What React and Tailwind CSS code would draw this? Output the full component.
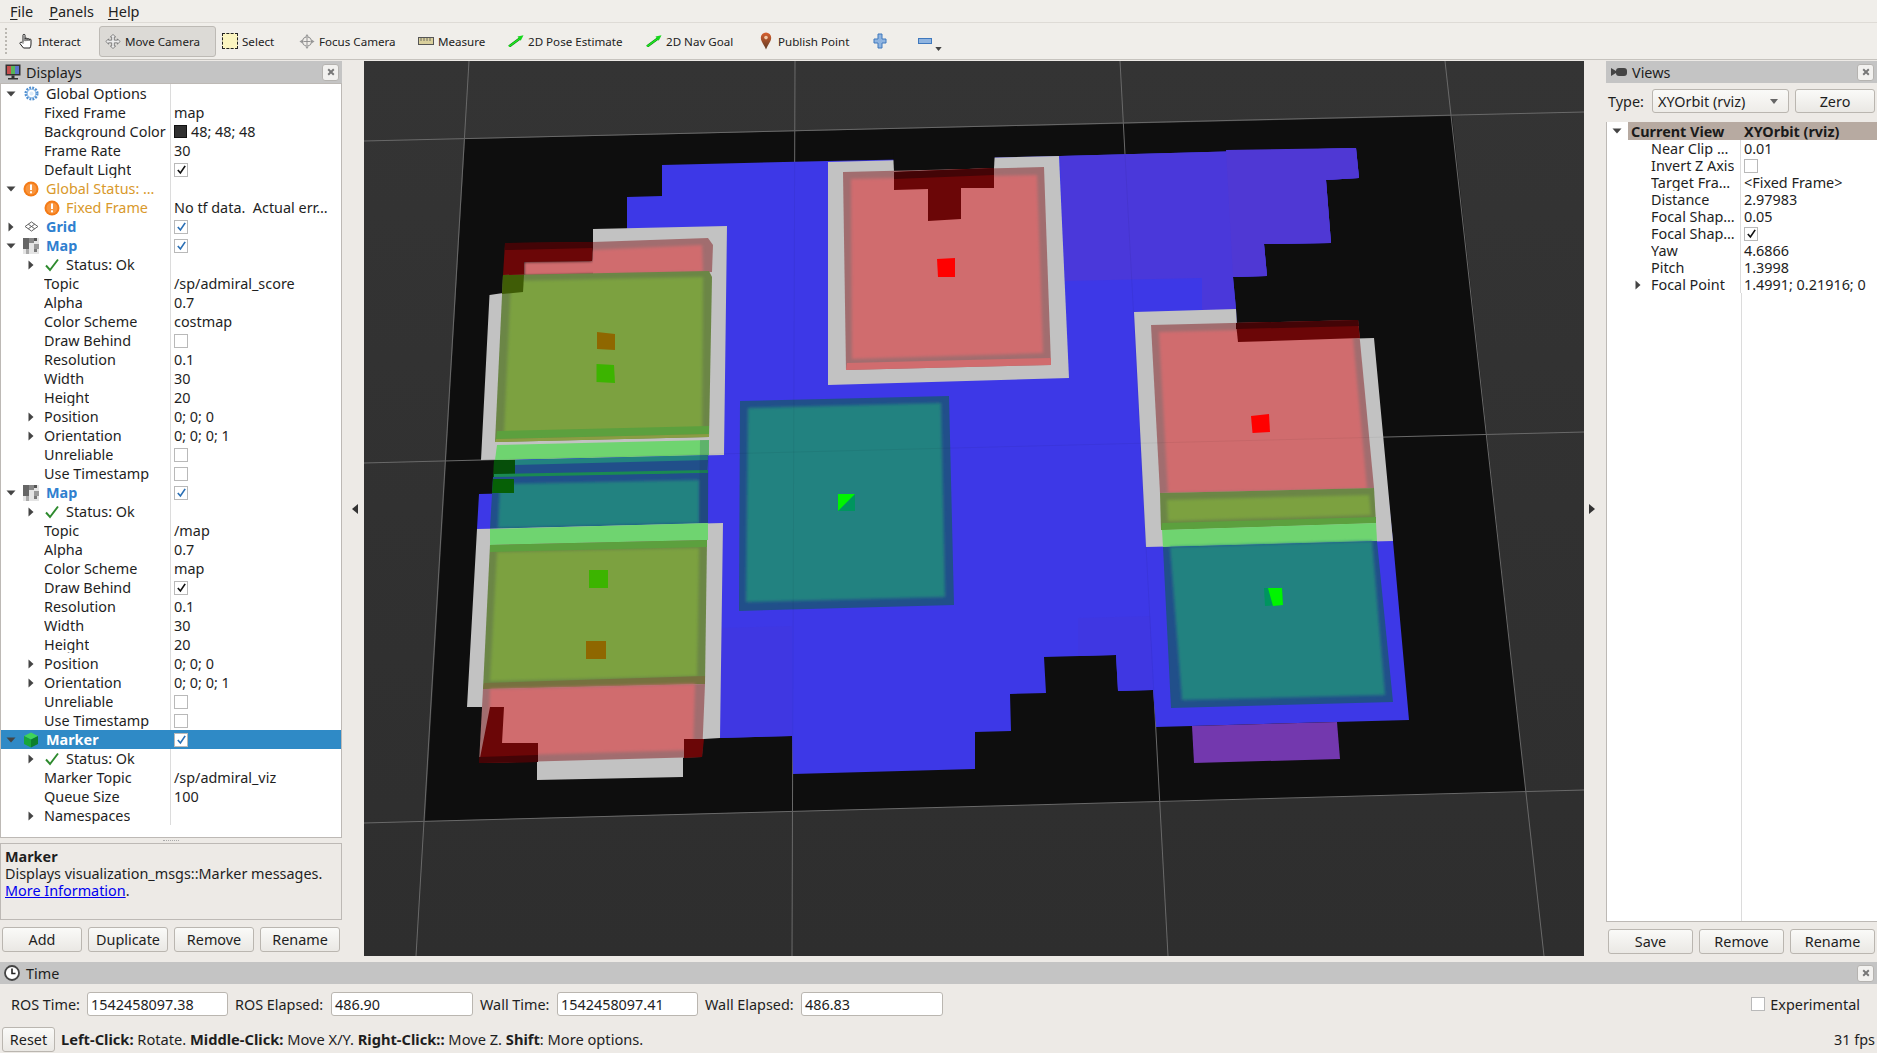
const Poly = ({ p, f, soft, o }) => (
    <polygon points={p} fill={f} filter={soft ? "url(#soft)" : undefined} opacity={o} />
);

const PINK = "#d06c6e";
const PINK_EDGE = "#a16d6f";
const DARK_RED = "#6b0607";
const DARK_RED_EDGE = "#430406";
const OLIVE = "#7ba13f";
const OLIVE_EDGE = "#6b8646";
const OLIVE_TOP = "#76713f";
const OLIVE_LOW = "#5ca03e";
const LIGHT = "#6fd470";
const TEAL = "#228280";
const TEAL_EDGE = "#214f8a";
const GREY = "#c2c2c2";
const BLUE = "#3d38e7";

const gridLines = [
    [469, 61, 416, 956],
    [795, 61, 792, 956],
    [1120, 61, 1168, 956],
    [1445, 61, 1544, 956],
    [364, 141, 1584, 112],
    [364, 463, 1584, 432],
    [364, 823, 1584, 790],
];

const Scene = () => (
    <svg viewBox="364 61 1220 895" className="block w-[1220px] h-[895px]">
        <defs>
            <filter id="soft" x="-5%" y="-5%" width="110%" height="110%">
                <feGaussianBlur stdDeviation="1.6" />
            </filter>
        </defs>
        <Poly p="465,139 1452,116 1526,792 425,821" f="#0e0e0e" />
        {gridLines.map((l, i) => (
            <line key={i} x1={l[0]} y1={l[1]} x2={l[2]} y2={l[3]} stroke="#6f6f6f" strokeWidth="1" />
        ))}

        {/* free space */}
        <Poly
            p="627,197 662,196 662,165 828,161 1060,156 1356,148 1359,178 1326,180 1331,243 1264,244 1267,276 1233,277 1236,309 1240,400 1380,420 1393,541 1409,720 1156,727 1153,690 1118,691 1116,655 1044,657 1046,693 1010,694 1011,731 975,732 975,769 793,774 792,736 720,738 715,530 477,529 479,494 515,493 515,460 600,300 627,228"
            f={BLUE}
        />
        <Poly p="1060,156 1356,148 1359,178 1326,180 1331,243 1264,244 1267,276 1233,277 1236,309 1202,310 1202,278 1065,281" f="#4a38da" />
        <Poly p="1226,150 1356,148 1359,178 1326,180 1331,243 1264,244 1267,276 1233,277" f="#4f38d4" />
        <Poly p="720,628 720,738 792,736 792,626" f="#3f37e2" />
        <Poly p="1078,618 1150,616 1153,690 1118,691 1116,655 1078,656" f="#3f37e2" />
        <Poly p="1192,726 1337,722 1340,759 1194,763" f="#7338ae" />

        {/* upper left block */}
        <Poly p="593,229 727,226 724,455 481,460 489.5,295 593,280" f={GREY} />
        <Poly p="593,242 708,238 713,245 712,272 593,276" f={PINK_EDGE} />
        <Poly p="524,262 592,261 592,250 702,245 703,272 524,276" f={PINK} soft />
        <Poly p="505,243 593,242 592,261 524,262 524,275 503,275" f={DARK_RED} />
        <Poly p="505,243 593,242 593,248 505,250" f={DARK_RED_EDGE} />
        <Poly p="503,275 709,271 712,277 709,437 495,442" f={OLIVE_EDGE} />
        <Poly p="511,281 703,277 702,430 504,434" f={OLIVE} soft />
        <Poly p="497,431 709,426 709,434 496,439" f={OLIVE_LOW} />
        <Poly p="496,439 709,434 709,437 495,442" f="#8a9d43" />
        <Poly p="503,275 524,275 523,292 502,294" f="#3f5c06" />
        <Poly p="497,445 709,440 709,455 495,460" f={LIGHT} />
        <Poly p="515,460 708,455 707,473 515,477" f={TEAL} />
        <Poly p="515,465 708,460 707,473 515,477" f={TEAL_EDGE} />
        <Poly p="494,460 515,460 515,476 493,477" f="#064f0a" />
        <Poly p="494,474 708,470 708,473 494,478" f="#1a8a52" />
        <Poly p="493,477 708,473 708,523 490,529" f={TEAL_EDGE} />
        <Poly p="500,484 699,480 699,523 498,528" f={TEAL} soft />
        <Poly p="493,479 514,479 514,493 492,493" f="#066006" />
        <Poly p="700,440 709,440 708,523 699,523" f="#20305a" o="0.2" />
        <Poly p="597,332 615,334 615,350 597,349" f="#8f6700" />
        <Poly p="596.5,364 614,365 615,383 596.5,382" f="#3cb400" />

        {/* lower left block */}
        <Poly p="477,529 723,523 720,738 704,739 683,758 683,777 537,780 537,762 500,740 490,707 467,707" f={GREY} />
        <Poly p="490,529 708,523 708,540 490,545" f={LIGHT} />
        <Poly p="490,545 707,540 705,684 483,689" f={OLIVE_EDGE} />
        <Poly p="497,552 699,548 697,676 490,681" f={OLIVE} soft />
        <Poly p="490,545 707,540 707,547 490,552" f={OLIVE_LOW} />
        <Poly p="484,683 705,676 705,684 483,689" f={OLIVE_TOP} />
        <Poly p="589,570 608,570 608,588 589,588" f="#3cb400" />
        <Poly p="586,641 606,641 606,659 586,659" f="#8f6700" />
        <Poly p="483,689 705,684 702,757 479,763" f={PINK_EDGE} />
        <Poly p="490,689 695,684 693,750 488,756" f={PINK} soft />
        <Poly p="490,707 504,707 502,743 538,743 538,762 479,763" f={DARK_RED} />
        <Poly p="684,739 704,739 702,757 684,758" f={DARK_RED} />
        <Poly p="479,757 538,755 538,762 479,763" f={DARK_RED_EDGE} />

        {/* top middle block */}
        <Poly p="828,162 1059,156 1069,378 828,385" f={GREY} />
        <Poly p="893,150 995,150 994,168 894,172" f="#0e0e0e" />
        <Poly p="843,172 1044,167 1051,365 846,370" f={PINK_EDGE} />
        <Poly p="851,179 1037,175 1043,353 852,359" f={PINK} soft />
        <Poly p="847,363 1051,358 1051,365 846,370" f={PINK} />
        <Poly p="894,172 994,168 994,188 961,188 961,219 928,221 928,189 894,190" f={DARK_RED} />
        <Poly p="894,172 994,168 994,175 894,179" f={DARK_RED_EDGE} />
        <Poly p="937,259 955,258 955,277 938,277" f="#ff0000" />

        {/* center teal block */}
        <Poly p="740,401 949,396 954,605 739,611" f={TEAL_EDGE} />
        <Poly p="748,408 941,403 945,597 746,602" f={TEAL} soft />
        <Poly p="838,494 855,494 855,511 838,511" f="#00955f" />
        <Poly p="838,494 855,494 838,511" f="#00f500" />

        {/* right block */}
        <Poly p="1134,312 1236,309 1238,342 1374,338 1393,541 1146,547" f={GREY} />
        <Poly p="1151,325 1358,320 1374,488 1160,493" f={PINK_EDGE} />
        <Poly p="1159,332 1352,327 1367,489 1168,493" f={PINK} soft />
        <Poly p="1236,323 1358,320 1360,338 1238,342" f={DARK_RED} />
        <Poly p="1236,323 1358,320 1359,326 1236,329" f={DARK_RED_EDGE} />
        <Poly p="1160,493 1374,488 1376,523 1161,530" f={OLIVE_EDGE} />
        <Poly p="1167,500 1369,495 1371,515 1168,521" f={OLIVE} soft />
        <Poly p="1162,523 1376,517 1376,523 1161,530" f={OLIVE_LOW} />
        <Poly p="1162,530 1376,523 1377,541 1163,547" f={LIGHT} />
        <Poly p="1163,547 1377,541 1393,702 1171,708" f={TEAL_EDGE} />
        <Poly p="1170,547 1372,541 1385,695 1182,700" f={TEAL} soft />
        <Poly p="1251,416 1269,414 1270,432 1252.5,433" f="#ff0000" />
        <Poly p="1264,588 1282,588 1283,605 1265,606" f="#00955f" />
        <Poly p="1268,588 1282,588 1283,605 1273,606" f="#00f500" />

        {gridLines.map((l, i) => (
            <line key={i} x1={l[0]} y1={l[1]} x2={l[2]} y2={l[3]} stroke="#000" strokeOpacity="0.05" strokeWidth="1" />
        ))}
    </svg>
);

const Arrow = ({ open }) => (
    <svg viewBox="0 0 10 10" className="w-[10px] h-[10px] shrink-0">
        {open ? <polygon points="0.5,2.5 9.5,2.5 5,7.5" fill="#444" /> : <polygon points="2.5,0.5 7.5,5 2.5,9.5" fill="#444" />}
    </svg>
);

const Check = ({ on, blue }) => (
    <span className="flex items-center justify-center w-[14px] h-[14px] bg-white border border-[#b9b9b9] shrink-0">
        {on && (
            <svg viewBox="0 0 12 12" className="w-[11px] h-[11px]">
                <path d="M2 6.5 L4.8 9.8 L10 2" fill="none" stroke={blue ? "#2a6fb5" : "#111"} strokeWidth="1.8" />
            </svg>
        )}
    </span>
);

const Warn = () => (
    <svg viewBox="0 0 16 16" className="w-[16px] h-[16px] shrink-0">
        <circle cx="8" cy="8" r="7.5" fill="#f47b16" />
        <circle cx="8" cy="8" r="5.5" fill="#f8953f" />
        <rect x="7" y="3.5" width="2" height="5.5" fill="#fff" />
        <rect x="7" y="10.3" width="2" height="2" fill="#fff" />
    </svg>
);

const Tick = () => (
    <svg viewBox="0 0 14 14" className="w-[14px] h-[14px] shrink-0">
        <path d="M1 7.5 L5 12 L13 1.5" fill="none" stroke="#2d8a2d" strokeWidth="1.9" />
    </svg>
);

const Gear = () => (
    <svg viewBox="0 0 16 16" className="w-[15px] h-[15px] shrink-0">
        <circle cx="8" cy="8" r="6.2" fill="none" stroke="#4f8fd0" strokeWidth="2.6" strokeDasharray="2 1.25" />
        <circle cx="8" cy="8" r="4.6" fill="none" stroke="#8db9e6" strokeWidth="1.2" />
        <circle cx="8" cy="8" r="2.2" fill="#dcebf9" />
    </svg>
);

const GridIcon = () => (
    <svg viewBox="0 0 16 12" className="w-[15px] h-[11px] shrink-0">
        <path d="M8 1 L15 6 L8 11 L1 6 Z M4.5 3.5 L11.5 8.5 M11.5 3.5 L4.5 8.5" fill="none" stroke="#555" strokeWidth="1" />
    </svg>
);

const MapIcon = () => (
    <svg viewBox="0 0 16 16" className="w-[16px] h-[16px] shrink-0">
        <rect width="16" height="16" fill="#e4e4e4" />
        <rect x="0" y="0" width="6" height="11" fill="#666" />
        <rect x="6" y="0" width="5" height="5" fill="#888" />
        <rect x="11" y="0" width="3" height="3" fill="#555" />
        <rect x="3" y="11" width="3" height="5" fill="#aaa" />
        <rect x="11" y="6" width="5" height="5" fill="#999" />
        <rect x="11" y="11" width="3" height="3" fill="#777" />
    </svg>
);

const Cube = () => (
    <svg viewBox="0 0 16 16" className="w-[16px] h-[16px] shrink-0">
        <polygon points="8,0.5 15,4 8,7.5 1,4" fill="#3fd45a" />
        <polygon points="1,4 8,7.5 8,15.5 1,12" fill="#17a63a" />
        <polygon points="15,4 8,7.5 8,15.5 15,12" fill="#0b7f2c" />
    </svg>
);

const Monitor = () => (
    <svg viewBox="0 0 16 16" className="w-[16px] h-[16px] shrink-0">
        <rect x="0.5" y="0.5" width="15" height="11" fill="#333" />
        <rect x="2" y="2" width="4" height="8" fill="#c64f4f" />
        <rect x="6" y="2" width="4" height="8" fill="#58b558" />
        <rect x="10" y="2" width="4" height="8" fill="#5a74c9" />
        <rect x="6.5" y="11.5" width="3" height="2.5" fill="#333" />
        <rect x="3" y="14" width="10" height="1.5" fill="#333" />
    </svg>
);

const CameraIcon = () => (
    <svg viewBox="0 0 16 10" className="w-[16px] h-[10px] shrink-0">
        <polygon points="0,1 5,4 5,6 0,9" fill="#444" />
        <rect x="5" y="1" width="11" height="8" rx="3" fill="#444" />
    </svg>
);

const ClockIcon = () => (
    <svg viewBox="0 0 16 16" className="w-[16px] h-[16px] shrink-0">
        <circle cx="8" cy="8" r="7" fill="#fff" stroke="#444" strokeWidth="1.8" />
        <path d="M8 3.5 V8.5 H11.5" fill="none" stroke="#222" strokeWidth="1.6" />
    </svg>
);

const CloseButton = () => (
    <span className="flex items-center justify-center w-[17px] h-[17px] rounded-[3px] bg-[#f2f1ef] border border-[#b5b3b0]">
        <svg viewBox="0 0 10 10" className="w-[8px] h-[8px]">
            <path d="M1.5 1.5 L8.5 8.5 M8.5 1.5 L1.5 8.5" stroke="#777" strokeWidth="2.4" />
        </svg>
    </span>
);

const PanelHeader = ({ icon, title }) => (
    <div className="flex items-center h-[22px] bg-[#c4c4c4] pl-[4px] pr-[3px] shrink-0">
        <span className="flex justify-center w-[18px]">{icon}</span>
        <span className="ml-[4px] text-[#1e1e1e]">{title}</span>
        <span className="ml-auto">
            <CloseButton />
        </span>
    </div>
);

const Btn = ({ children, className }) => (
    <button className={"h-[25px] rounded-[3px] border border-[#bab6b0] bg-linear-to-b from-[#fafaf8] to-[#eae8e4] text-[#1e1e1e] " + className}>
        {children}
    </button>
);

// one line of the Displays tree
const Row = ({ kind = "prop", open, icon, label, value, check, blue, tone = "", sel }) => {
    let head = null;
    if (kind === "top") {
        head = (
            <>
                <span className="flex justify-center w-[10px] ml-[5px]">
                    <Arrow open={open} />
                </span>
                <span className="flex justify-center w-[16px] ml-[7px]">{icon}</span>
                <span className={"ml-[7px] truncate " + tone}>{label}</span>
            </>
        );
    } else if (kind === "status") {
        head = (
            <>
                <span className="w-[10px] ml-[25px]">
                    <Arrow />
                </span>
                <span className="ml-[9px]">{icon}</span>
                <span className={"ml-[7px] truncate " + tone}>{label}</span>
            </>
        );
    } else if (kind === "warn") {
        head = (
            <>
                <span className="ml-[43px]">{icon}</span>
                <span className={"ml-[6px] truncate " + tone}>{label}</span>
            </>
        );
    } else if (kind === "sub") {
        head = (
            <>
                <span className="w-[10px] ml-[25px]">
                    <Arrow />
                </span>
                <span className="ml-[8px] truncate">{label}</span>
            </>
        );
    } else {
        head = <span className="ml-[43px] truncate">{label}</span>;
    }
    return (
        <div className={"flex h-[19px] shrink-0 " + (sel ? "bg-[#2f8ac6]" : "")}>
            <div className={"flex items-center w-[170px] shrink-0 " + (sel ? "" : "border-r border-[#dcdcdc]")}>{head}</div>
            <div className="flex items-center pl-[3px] min-w-0 whitespace-pre">
                {check !== undefined ? <Check on={check} blue={blue} /> : value}
            </div>
        </div>
    );
};

const mapRows = (topic, scheme, behind) => (
    <>
        <Row kind="status" icon={<Tick />} label="Status: Ok" />
        <Row label="Topic" value={topic} />
        <Row label="Alpha" value="0.7" />
        <Row label="Color Scheme" value={scheme} />
        <Row label="Draw Behind" check={behind} />
        <Row label="Resolution" value="0.1" />
        <Row label="Width" value="30" />
        <Row label="Height" value="20" />
        <Row kind="sub" label="Position" value="0; 0; 0" />
        <Row kind="sub" label="Orientation" value="0; 0; 0; 1" />
        <Row label="Unreliable" check={false} />
        <Row label="Use Timestamp" check={false} />
    </>
);

const BLUE_LABEL = "font-bold text-[#2f80cf]";
const ORANGE_LABEL = "text-[#d9992b]";

const DisplaysTree = () => (
    <div className="flex flex-col h-[755px] bg-white border border-[#bdb9b5] overflow-hidden">
        <Row kind="top" open icon={<Gear />} label="Global Options" />
        <Row label="Fixed Frame" value="map" />
        <Row
            label="Background Color"
            value={
                <span className="flex items-center gap-[4px]">
                    <span className="w-[13px] h-[13px] bg-[#303030] border border-[#111]" />
                    48; 48; 48
                </span>
            }
        />
        <Row label="Frame Rate" value="30" />
        <Row label="Default Light" check={true} />
        <Row kind="top" open icon={<Warn />} label="Global Status: …" tone={ORANGE_LABEL} />
        <Row kind="warn" icon={<Warn />} label="Fixed Frame" tone={ORANGE_LABEL} value="No tf data.  Actual err…" />
        <Row kind="top" icon={<GridIcon />} label="Grid" tone={BLUE_LABEL} check={true} blue />
        <Row kind="top" open icon={<MapIcon />} label="Map" tone={BLUE_LABEL} check={true} blue />
        {mapRows("/sp/admiral_score", "costmap", false)}
        <Row kind="top" open icon={<MapIcon />} label="Map" tone={BLUE_LABEL} check={true} blue />
        {mapRows("/map", "map", true)}
        <Row kind="top" open sel icon={<Cube />} label="Marker" tone="font-bold text-white" check={true} blue />
        <Row kind="status" icon={<Tick />} label="Status: Ok" />
        <Row label="Marker Topic" value="/sp/admiral_viz" />
        <Row label="Queue Size" value="100" />
        <Row kind="sub" label="Namespaces" />
    </div>
);

const ViewRow = ({ label, value, check, sub }) => (
    <div className="flex h-[17px] shrink-0">
        <div className="flex items-center w-[134px] shrink-0 border-r border-[#dcdcdc]">
            {sub ? (
                <span className="ml-[26px] w-[18px]">
                    <Arrow />
                </span>
            ) : (
                <span className="ml-[44px]" />
            )}
            <span className="truncate">{label}</span>
        </div>
        <div className="flex items-center pl-[3px] whitespace-nowrap">
            {check !== undefined ? <Check on={check} /> : value}
        </div>
    </div>
);

const ViewsPanel = () => (
    <div className="flex flex-col w-[271px] shrink-0">
        <PanelHeader icon={<CameraIcon />} title="Views" />
        <div className="flex items-center h-[24px] mt-[6px] mb-[9px] shrink-0">
            <span className="ml-[2px] w-[44px]">Type:</span>
            <div className="flex items-center w-[137px] h-[24px] px-[5px] rounded-[3px] border border-[#bab6b0] bg-linear-to-b from-[#fafaf8] to-[#eeece8]">
                XYOrbit (rviz)
                <svg viewBox="0 0 10 6" className="w-[8px] h-[5px] ml-auto mr-[5px]">
                    <polygon points="0,0 10,0 5,6" fill="#666" />
                </svg>
            </div>
            <Btn className="w-[80px] ml-[6px] !h-[24px]">Zero</Btn>
        </div>
        <div className="flex flex-col h-[800px] bg-white border border-t-0 border-[#bdb9b5] border-r-0 overflow-hidden">
            <div className="flex h-[18px] shrink-0 font-bold text-[#1a1a1a]">
                <div className="flex items-center w-[21px] shrink-0 pl-[5px]">
                    <Arrow open />
                </div>
                <div className="flex items-center w-[113px] shrink-0 bg-[#b7aaa1] pl-[3px]">Current View</div>
                <div className="flex items-center flex-1 bg-[#b7aaa1] pl-[3px]">XYOrbit (rviz)</div>
            </div>
            <ViewRow label="Near Clip …" value="0.01" />
            <ViewRow label="Invert Z Axis" check={false} />
            <ViewRow label="Target Fra…" value="<Fixed Frame>" />
            <ViewRow label="Distance" value="2.97983" />
            <ViewRow label="Focal Shap…" value="0.05" />
            <ViewRow label="Focal Shap…" check={true} />
            <ViewRow label="Yaw" value="4.6866" />
            <ViewRow label="Pitch" value="1.3998" />
            <ViewRow sub label="Focal Point" value="1.4991; 0.21916; 0" />
            <div className="flex-1 ml-[134px] border-l border-[#dcdcdc]" />
        </div>
        <div className="flex gap-[6px] mt-[7px] ml-[2px]">
            <Btn className="w-[85px]">Save</Btn>
            <Btn className="w-[85px]">Remove</Btn>
            <Btn className="w-[85px]">Rename</Btn>
        </div>
    </div>
);

const Tool = ({ icon, label, width, active }) => (
    <div
        className={
            "flex items-center gap-[4px] pl-[5px] h-[31px] shrink-0 rounded-[3px] border " +
            (active ? "bg-[#dcdad6] border-[#bdbab5]" : "border-transparent")
        }
        style={{ width }}
    >
        <span className="flex justify-center w-[16px] shrink-0">{icon}</span>
        <span className="whitespace-nowrap text-[#222] text-[11.6px]">{label}</span>
    </div>
);

const HandIcon = () => (
    <svg viewBox="0 0 16 16" className="w-[16px] h-[16px]">
        <path
            d="M5 9.5 V2.3 a1 1 0 0 1 2 0 V8 M7 6 a1 1 0 0 1 2 0 V8 M9 6.5 a1 1 0 0 1 2 0 V8 M11 7 a1 1 0 0 1 2 0 V11 C13 12.8 12.6 13.8 12 15 H5.5 L2 10.7 C1.4 9.6 3 8.7 4 9.5 L5 10.5"
            fill="#fff"
            stroke="#222"
            strokeWidth="1"
        />
    </svg>
);

const MoveIcon = () => (
    <svg viewBox="0 0 18 18" className="w-[17px] h-[17px]">
        <path
            d="M9 1 L12 4 H10.5 V7.5 H14 V6 L17 9 L14 12 V10.5 H10.5 V14 H12 L9 17 L6 14 H7.5 V10.5 H4 V12 L1 9 L4 6 V7.5 H7.5 V4 H6 Z"
            fill="#ececec"
            stroke="#777"
            strokeWidth="1"
        />
    </svg>
);

const SelectIcon = () => (
    <span className="block w-[16px] h-[16px] bg-[#fbf5c0] border border-dashed border-[#222]" />
);

const FocusIcon = () => (
    <svg viewBox="0 0 18 18" className="w-[17px] h-[17px]">
        <circle cx="9" cy="9" r="5" fill="none" stroke="#888" strokeWidth="1.2" />
        <path d="M9 0.5 L11 3.5 H7 Z M9 17.5 L11 14.5 H7 Z M0.5 9 L3.5 7 V11 Z M17.5 9 L14.5 7 V11 Z" fill="#999" />
        <path d="M9 5 V13 M5 9 H13" stroke="#888" strokeWidth="1" />
    </svg>
);

const RulerIcon = () => (
    <svg viewBox="0 0 16 8" className="w-[16px] h-[8px]">
        <rect x="0.5" y="0.5" width="15" height="7" fill="#d9cf9c" stroke="#555" />
        <path d="M3 1 V4 M6 1 V4 M9 1 V4 M12 1 V4" stroke="#555" strokeWidth="0.8" />
    </svg>
);

const ArrowIcon = () => (
    <svg viewBox="0 0 16 12" className="w-[16px] h-[12px]">
        <path d="M1 11.5 L12.5 3" stroke="#0a8a12" strokeWidth="2.6" />
        <path d="M1 11.5 L12.5 3" stroke="#22f022" strokeWidth="1.3" />
        <polygon points="15.5,0.3 9.5,1.6 12.7,5.8" fill="#16d81c" />
    </svg>
);

const PinIcon = () => (
    <svg viewBox="0 0 12 18" className="w-[12px] h-[18px]">
        <defs>
            <linearGradient id="pin" x1="0" y1="0" x2="0" y2="1">
                <stop offset="0" stopColor="#d9602f" />
                <stop offset="1" stopColor="#5c3a24" />
            </linearGradient>
        </defs>
        <path d="M6 17.5 C4 12.5 0.8 9.5 0.8 5.8 A5.2 5.2 0 0 1 11.2 5.8 C11.2 9.5 8 12.5 6 17.5 Z" fill="url(#pin)" />
        <circle cx="6" cy="5.6" r="1.8" fill="#f2c9a8" />
    </svg>
);

const Toolbar = () => (
    <div className="flex items-center h-[38px] pl-[5px] shrink-0 border-t border-b border-t-[#dedbd6] border-b-[#c6c3be] bg-[#f0eeea]">
        <span className="w-[3px] h-[26px] mr-[4px] border-l-2 border-dotted border-[#bbb8b2]" />
        <Tool width={87} label="Interact" icon={<HandIcon />} />
        <Tool width={117} active label="Move Camera" icon={<MoveIcon />} />
        <Tool width={77} label="Select" icon={<SelectIcon />} />
        <Tool width={119} label="Focus Camera" icon={<FocusIcon />} />
        <Tool width={90} label="Measure" icon={<RulerIcon />} />
        <Tool width={138} label="2D Pose Estimate" icon={<ArrowIcon />} />
        <Tool width={112} label="2D Nav Goal" icon={<ArrowIcon />} />
        <Tool width={115} label="Publish Point" icon={<PinIcon />} />
        <svg viewBox="0 0 14 16" className="w-[14px] h-[16px] ml-[6px]">
            <path d="M5 1 H9 V6 H13 V10 H9 V15 H5 V10 H1 V6 H5 Z" fill="#8fb4e0" stroke="#3f78bd" />
        </svg>
        <svg viewBox="0 0 14 6" className="w-[14px] h-[6px] ml-[31px]">
            <rect x="0.5" y="0.5" width="13" height="5" fill="#8fb4e0" stroke="#3f78bd" />
        </svg>
        <svg viewBox="0 0 8 5" className="w-[7px] h-[4px] ml-[3px] mt-[16px]">
            <polygon points="0,0 8,0 4,5" fill="#444" />
        </svg>
    </div>
);

const MenuItem = ({ first, rest, className }) => (
    <span className={"text-[#222] " + className}>
        <span className="underline underline-offset-2">{first}</span>
        {rest}
    </span>
);

const SideHandle = ({ right }) => (
    <div className={"flex items-center justify-center w-[22px] shrink-0 h-[895px] self-start " + (right ? "pr-[7px]" : "pl-[4px]")}>
        <svg viewBox="0 0 6 10" className="w-[6px] h-[10px]">
            <polygon points={right ? "0,0 6,5 0,10" : "6,0 0,5 6,10"} fill="#333" />
        </svg>
    </div>
);

const TimeField = ({ label, value, labelW, inputW }) => (
    <>
        <span className="shrink-0 whitespace-nowrap" style={{ width: labelW }}>
            {label}
        </span>
        <div
            className="flex items-center h-[24px] px-[3px] mr-[7px] bg-white border border-[#bab6b0] rounded-[3px] shrink-0"
            style={{ width: inputW }}
        >
            {value}
        </div>
    </>
);

export default function App() {
    return (
        <div className="flex flex-col w-[1877px] h-[1053px] overflow-hidden bg-[#edeae6] font-['Noto_Sans',sans-serif] text-[14.4px] leading-[17px] text-[#1e1e1e]">
            <div className="flex items-center h-[22px] shrink-0 bg-[#f0eeea] text-[14.5px]">
                <MenuItem first="F" rest="ile" className="ml-[10px]" />
                <MenuItem first="P" rest="anels" className="ml-[16px]" />
                <MenuItem first="H" rest="elp" className="ml-[14px]" />
            </div>
            <Toolbar />
            <div className="flex h-[902px] pt-[1px] shrink-0">
                <div className="flex flex-col w-[342px] shrink-0">
                    <PanelHeader icon={<Monitor />} title="Displays" />
                    <DisplaysTree />
                    <div className="flex justify-center items-center h-[5px]">
                        <span className="w-[16px] border-t border-dotted border-[#aaa]" />
                    </div>
                    <div className="flex flex-col h-[77px] pt-[4px] pl-[4px] border border-[#bdb9b5]">
                        <span className="font-bold">Marker</span>
                        <span>Displays visualization_msgs::Marker messages.</span>
                        <span>
                            <span className="text-[#0000ee] underline">More Information</span>.
                        </span>
                    </div>
                    <div className="flex gap-[6px] mt-[7px] ml-[2px]">
                        <Btn className="w-[80px]">Add</Btn>
                        <Btn className="w-[80px]">Duplicate</Btn>
                        <Btn className="w-[80px]">Remove</Btn>
                        <Btn className="w-[80px]">Rename</Btn>
                    </div>
                </div>
                <SideHandle />
                <div className="w-[1220px] h-[895px] shrink-0 bg-linear-to-b from-[#343434] to-[#2e2e2e]">
                    <Scene />
                </div>
                <SideHandle right />
                <ViewsPanel />
            </div>
            <div className="flex items-center h-[22px] shrink-0 bg-[#c4c4c4] pl-[4px] pr-[3px]">
                <ClockIcon />
                <span className="ml-[6px]">Time</span>
                <span className="ml-auto">
                    <CloseButton />
                </span>
            </div>
            <div className="flex items-center h-[24px] mt-[8px] pl-[11px] shrink-0">
                <TimeField label="ROS Time:" value="1542458097.38" labelW={76} inputW={141} />
                <TimeField label="ROS Elapsed:" value="486.90" labelW={96} inputW={142} />
                <TimeField label="Wall Time:" value="1542458097.41" labelW={77} inputW={141} />
                <TimeField label="Wall Elapsed:" value="486.83" labelW={96} inputW={142} />
                <span className="flex items-center gap-[5px] ml-auto mr-[17px]">
                    <Check on={false} />
                    Experimental
                </span>
            </div>
            <div className="flex items-center h-[25px] mt-[11px] shrink-0">
                <Btn className="w-[53px] ml-[2px]">Reset</Btn>
                <span className="ml-[6px] text-[14.65px]">
                    <b>Left-Click:</b> Rotate. <b>Middle-Click:</b> Move X/Y. <b>Right-Click::</b> Move Z. <b>Shift</b>: More
                    options.
                </span>
                <span className="ml-auto mr-[2px]">31 fps</span>
            </div>
        </div>
    );
}
